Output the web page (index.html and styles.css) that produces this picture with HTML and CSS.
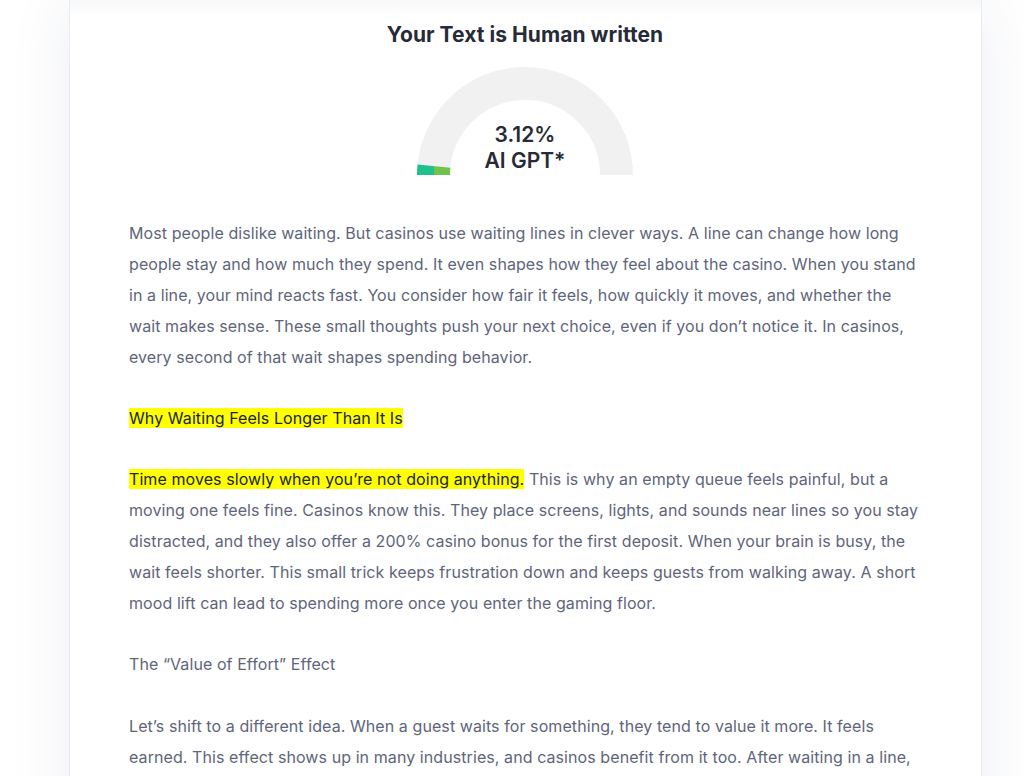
FILE: index.html
```html
<!DOCTYPE html>
<html lang="en">
<head>
  <meta charset="UTF-8">
  <meta name="viewport" content="width=device-width, initial-scale=1.0">
  <title>AI Detector Result</title>
  <link rel="stylesheet" href="styles.css">
</head>
<body>
  <div class="page">
    <div class="result-card">
      <h2 class="result-title">Your Text is Human written</h2>

      <div class="gauge">
        <svg class="gauge-svg" width="216" height="108" viewBox="0 0 216 108">
          <defs>
            <linearGradient id="gauge-fill" x1="0" y1="0" x2="1" y2="0">
              <stop offset="0" stop-color="#1fc08c"/>
              <stop offset="1" stop-color="#70c24a"/>
            </linearGradient>
          </defs>
          <path d="M 16.5 108 A 91.5 91.5 0 0 1 199.5 108" fill="none" stroke="#f1f1f1" stroke-width="33"/>
          <path d="M 16.5 108 A 91.5 91.5 0 0 1 16.94 99.08" fill="none" stroke="url(#gauge-fill)" stroke-width="33"/>
        </svg>
        <div class="gauge-label">
          <div class="gauge-value">3.12%</div>
          <div class="gauge-name">AI GPT*</div>
        </div>
      </div>

      <div class="result-text">
        <p>Most people dislike waiting. But casinos use waiting lines in clever ways. A line can change how long people stay and how much they spend. It even shapes how they feel about the casino. When you stand in a line, your mind reacts fast. You consider how fair it feels, how quickly it moves, and whether the wait makes sense. These small thoughts push your next choice, even if you don’t notice it. In casinos, every second of that wait shapes spending behavior.</p>

        <p><span class="mark">Why Waiting Feels Longer Than It Is</span></p>

        <p><span class="mark">Time moves slowly when you’re not doing anything.</span> This is why an empty queue feels painful, but a moving one feels fine. Casinos know this. They place screens, lights, and sounds near lines so you stay distracted, and they also offer a 200% casino bonus for the first deposit. When your brain is busy, the wait feels shorter. This small trick keeps frustration down and keeps guests from walking away. A short mood lift can lead to spending more once you enter the gaming floor.</p>

        <p>The “Value of Effort” Effect</p>

        <p>Let’s shift to a different idea. When a guest waits for something, they tend to value it more. It feels earned. This effect shows up in many industries, and casinos benefit from it too. After waiting in a line, the reward at the end feels bigger, and people are more willing to stay and play longer than they planned.</p>
      </div>
    </div>
  </div>
</body>
</html>
```

FILE: styles.css
```css
* {
  margin: 0;
  padding: 0;
  box-sizing: border-box;
}

body {
  font-family: Inter, 'Noto Sans', sans-serif;
  background: #ffffff;
  color: #5e657b;
  -webkit-font-smoothing: antialiased;
  overflow: hidden;
}

.page {
  padding: 0 42px 0 69px;
  height: 776px;
}

.result-card {
  width: 913px;
  min-height: 900px;
  background: linear-gradient(#f7f7f9 0, #ffffff 16px);
  border-left: 1px solid #e9ebf3;
  border-right: 1px solid #e9ebf3;
  box-shadow: 0 0 60px rgba(40, 50, 100, 0.08);
  padding: 22px 60px 40px 59px;
}

.result-title {
  text-align: center;
  font-size: 21px;
  line-height: 26px;
  font-weight: 700;
  color: #272b37;
  letter-spacing: 0.05px;
}

.gauge {
  position: relative;
  width: 216px;
  height: 108px;
  margin: 19px auto 0;
}

.gauge-svg {
  display: block;
}

.gauge-label {
  position: absolute;
  left: 0;
  right: 0;
  bottom: 1px;
  text-align: center;
  font-size: 21px;
  line-height: 26px;
  font-weight: 600;
  color: #272b37;
}

.result-text {
  margin-top: 43px;
  font-size: 16px;
  line-height: 30.9px;
  letter-spacing: 0.08px;
}

.result-text p {
  margin-bottom: 30.5px;
}

.mark {
  background: #ffff00;
  color: #20242f;
}
```
